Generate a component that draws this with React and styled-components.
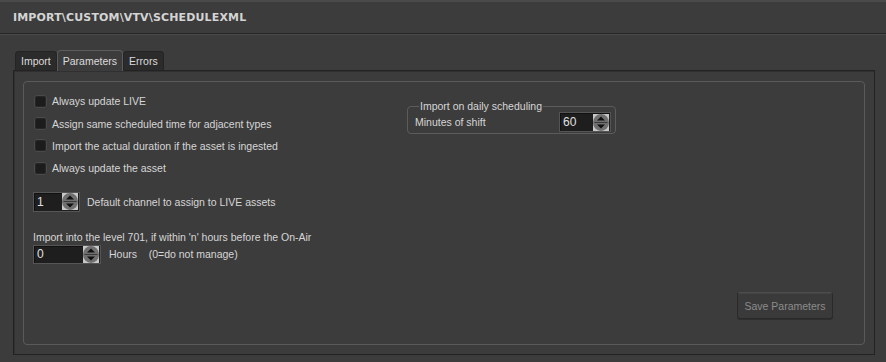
import React from "react";
import styled, { createGlobalStyle } from "styled-components";

const Global = createGlobalStyle`
  html, body { margin: 0; padding: 0; background: #3c3c3c; }
  body { font-family: "Liberation Sans", Arial, sans-serif; font-size: 10.5px; color: #d6d6d6; }
`;

const Window = styled.div`
  width: 886px;
  height: 362px;
  background: #3c3c3c;
  box-sizing: border-box;
  border-top: 2px solid #4a4a4a;
  display: flex;
  flex-direction: column;
`;

const TitleBar = styled.div`
  height: 32px;
  box-sizing: border-box;
  border-bottom: 1px solid #262626;
  box-shadow: 0 1px 0 #4a4a4a;
  display: flex;
  align-items: center;
  padding: 0 0 0 13px;
`;

const Title = styled.h1`
  margin: 0;
  font-family: "DejaVu Sans", sans-serif;
  font-weight: bold;
  font-size: 11px;
  letter-spacing: 0.15px;
  color: #d4d4d4;
`;

const Body = styled.div`
  flex: 1;
  display: flex;
  flex-direction: column;
  padding: 16px 11px 7px 13px;
`;

const TabBar = styled.div`
  display: flex;
  align-items: flex-end;
  padding-left: 2px;
  height: 20px;
`;

const Tab = styled.div`
  box-sizing: border-box;
  height: ${p => (p.$active ? "21px" : "19px")};
  padding: 0 ${p => (p.$active ? "5px" : "5px")};
  margin-bottom: ${p => (p.$active ? "-1px" : "0")};
  display: flex;
  align-items: center;
  background: ${p => (p.$active ? "#3c3c3c" : "#2b2b2b")};
  border: 1px solid ${p => (p.$active ? "#5c5c5c" : "#242424")};
  border-bottom: none;
  border-radius: 4px 4px 0 0;
  color: #dcdcdc;
  position: relative;
  z-index: ${p => (p.$active ? 2 : 1)};
`;

const Panel = styled.div`
  flex: 1;
  box-sizing: border-box;
  border: 1px solid #232323;
  box-shadow: inset 1px 1px 0 #303030;
  padding: 10px 9px 9px 9px;
  display: flex;
`;

const Group = styled.div`
  flex: 1;
  box-sizing: border-box;
  border: 1px solid #5a5a5a;
  border-radius: 4px;
  padding: 8px 0 0 9px;
  display: grid;
  grid-template-columns: 374px 1fr;
  grid-template-rows: 1fr auto;
`;

const LeftCol = styled.div`
  display: flex;
  flex-direction: column;
`;

const CheckRow = styled.label`
  display: flex;
  align-items: center;
  gap: 5px;
  height: 22.4px;
  margin-left: 1px;
`;

const Box = styled.span`
  width: 13px;
  height: 13px;
  box-sizing: border-box;
  border: 1px solid #4a4a4a;
  border-radius: 3px;
  background: #1c1c1c;
  box-shadow: inset 0 0 0 1px #262626;
`;

const SpinRow = styled.div`
  display: flex;
  align-items: center;
  gap: ${p => p.$gap || 7}px;
  margin-top: ${p => p.$mt || 0}px;
`;

const Spin = styled.div`
  width: ${p => p.$w}px;
  height: ${p => p.$h || 20}px;
  box-sizing: border-box;
  background: #1e1e1e;
  border: 1px solid #555;
  box-shadow: inset 1px 1px 0 #111;
  display: flex;
  align-items: center;
  justify-content: space-between;
  padding: 0 1px 0 3px;
  color: #e0e0e0;
  font-size: 12px;
`;

const SpinBtn = styled.span`
  width: 16px;
  height: 17px;
  display: flex;
  align-items: center;
  justify-content: center;
`;

const Spinner = () => (
  <SpinBtn>
    <svg width="16" height="17" viewBox="0 0 16 17">
      <rect x="0" y="0" width="16" height="17" fill="#c8c8c8" />
      <ellipse cx="8" cy="8.5" rx="8" ry="8.5" fill="#707070" />
      <path d="M1.5 8.5 H14.5" stroke="#3a3a3a" strokeWidth="1" />
      <path d="M8 2.5 L12 6.5 H4 Z" fill="#111" />
      <path d="M8 14.5 L12 10.5 H4 Z" fill="#111" />
    </svg>
  </SpinBtn>
);

const Text = styled.span`
  color: #d6d6d6;
  white-space: pre;
`;

const Note = styled.div`
  margin-top: 19px;
  margin-bottom: 2px;
`;

const RightCol = styled.div`
  padding-top: 10px;
`;

const Fieldset = styled.fieldset`
  width: 209px;
  box-sizing: border-box;
  margin: 0;
  border: 1px solid #5c5c5c;
  border-radius: 4px;
  padding: 0 4px 1px 7px;
  display: flex;
  align-items: center;
  justify-content: space-between;
`;

const Legend = styled.legend`
  padding: 0 1px;
  margin-left: 4px;
  color: #d6d6d6;
  font-size: 10.5px;
`;

const Footer = styled.div`
  grid-column: 1 / 3;
  display: flex;
  justify-content: flex-end;
  padding: 0 31px 25px 0;
`;

const Button = styled.button`
  width: 96px;
  height: 27px;
  background: #3a3a3a;
  border: 1px solid #2a2a2a;
  border-top-color: #4c4c4c;
  border-radius: 3px;
  box-shadow: inset 0 1px 0 #444, 0 1px 0 #2e2e2e;
  color: #8c8c8c;
  font-family: "Liberation Sans", Arial, sans-serif;
  font-size: 10.5px;
  padding: 0;
`;

export default function App() {
  return (
    <>
      <Global />
      <Window>
        <TitleBar>
          <Title>IMPORT\CUSTOM\VTV\SCHEDULEXML</Title>
        </TitleBar>
        <Body>
          <TabBar>
            <Tab>Import</Tab>
            <Tab $active>Parameters</Tab>
            <Tab>Errors</Tab>
          </TabBar>
          <Panel>
            <Group>
              <LeftCol>
                <CheckRow><Box /><Text>Always update LIVE</Text></CheckRow>
                <CheckRow><Box /><Text>Assign same scheduled time for adjacent types</Text></CheckRow>
                <CheckRow><Box /><Text>Import the actual duration if the asset is ingested</Text></CheckRow>
                <CheckRow><Box /><Text>Always update the asset</Text></CheckRow>
                <SpinRow $mt={12}>
                  <Spin $w={47}><span>1</span><Spinner /></Spin>
                  <Text>Default channel to assign to LIVE assets</Text>
                </SpinRow>
                <Note><Text>Import into the level 701, if within 'n' hours before the On-Air</Text></Note>
                <SpinRow $gap={8}>
                  <Spin $w={68} $h={19}><span>0</span><Spinner /></Spin>
                  <Text>Hours    (0=do not manage)</Text>
                </SpinRow>
              </LeftCol>
              <RightCol>
                <Fieldset>
                  <Legend>Import on daily scheduling</Legend>
                  <Text>Minutes of shift</Text>
                  <Spin $w={52}><span>60</span><Spinner /></Spin>
                </Fieldset>
              </RightCol>
              <Footer>
                <Button disabled>Save Parameters</Button>
              </Footer>
            </Group>
          </Panel>
        </Body>
      </Window>
    </>
  );
}
